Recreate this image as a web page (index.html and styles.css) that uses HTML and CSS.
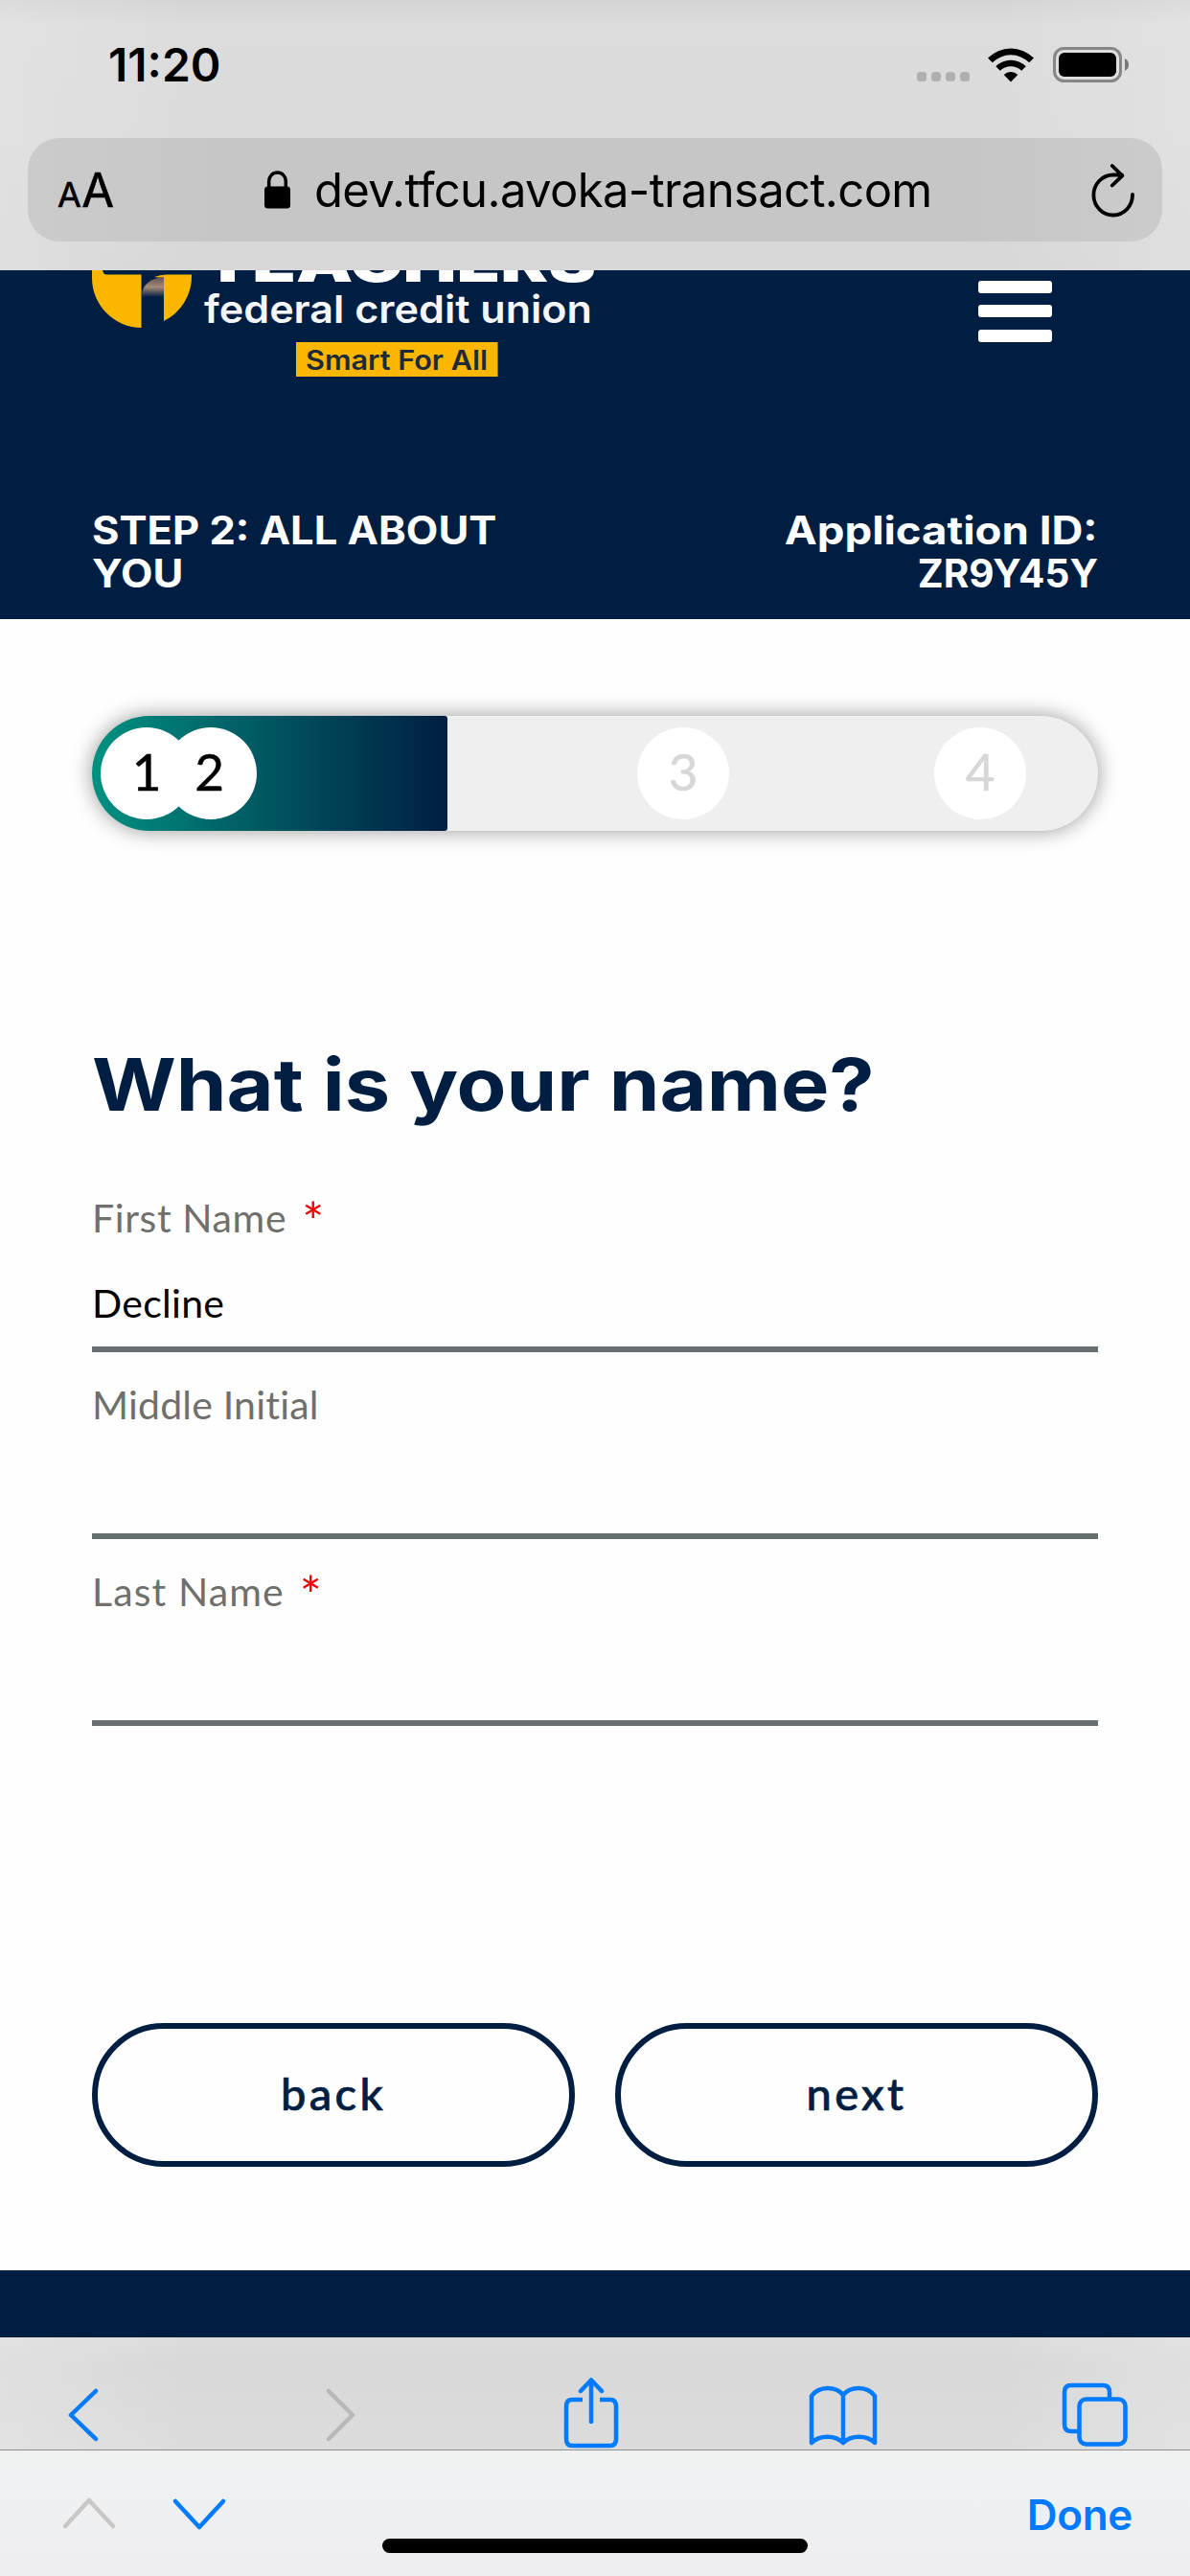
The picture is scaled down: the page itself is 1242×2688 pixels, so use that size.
FILE: index.html
```html
<!DOCTYPE html>
<html lang="en">
<head>
<meta charset="utf-8">
<title>Teachers Federal Credit Union</title>
<link rel="stylesheet" href="styles.css">
</head>
<body>
<div class="screen">
  <div class="browser-top">
    <div class="status-bar">
      <span class="time">11:20</span>
      <div class="status-icons">
        <span class="dots"><i></i><i></i><i></i><i></i></span>
        <svg class="wifi" width="48" height="37" viewBox="0 0 48 37">
          <path d="M0 11.5A34 34 0 0 1 48 11.5L43.2 16.3A27.2 27.2 0 0 0 4.8 16.3Z"/>
          <path d="M8.3 20.2A22.2 22.2 0 0 1 39.7 20.2L35.2 24.8A15.8 15.8 0 0 0 12.8 24.8Z"/>
          <path d="M16.7 28.9A10.5 10.5 0 0 1 31.3 28.9L24 36.6Z"/>
        </svg>
        <svg class="battery" width="80" height="37" viewBox="0 0 80 37">
          <rect x="1.5" y="1.5" width="69" height="34" rx="10" fill="none" stroke="#868686" stroke-width="3"/>
          <rect x="6" y="6" width="60" height="25" rx="6"/>
          <path d="M75 12Q79 14 79 18.500T75 25Z" fill="#777"/>
        </svg>
      </div>
    </div>
    <div class="address-bar">
      <span class="text-size"><span class="small-a">A</span><span class="large-a">A</span></span>
      <svg class="lock" width="27" height="40" viewBox="0 0 27 40">
        <rect x="0" y="16.500" width="27" height="23" rx="3.500"/>
        <path d="M4.700 19V11a8.800 9 0 0 1 17.600 0V19" fill="none" stroke="#000" stroke-width="3.500"/>
      </svg>
      <span class="domain">dev.tfcu.avoka-transact.com</span>
      <svg class="reload" width="46" height="56" viewBox="0 0 46 56">
        <path d="M43 31.800A20.300 21 0 1 1 22.700 11.500H32M21.800 2L32.300 12.300L21.800 22.500" fill="none" stroke="#000" stroke-width="3.800" stroke-linecap="round" stroke-linejoin="round"/>
      </svg>
    </div>
  </div>

  <header class="site-header">
    <div class="brand-row">
      <svg class="logo" width="530" height="112" viewBox="0 0 530 112">
        <defs>
          <linearGradient id="stem" x1="0" y1="0" x2="0" y2="1">
            <stop offset="0" stop-color="#5f5152"/>
            <stop offset=".5" stop-color="#a58a78"/>
            <stop offset="1" stop-color="#001e41"/>
          </linearGradient>
        </defs>
        <path d="M0 0H11Q12 5 16 4.500H51.500V60A52 52 0 0 1 0 8Z" fill="#fbb600"/>
        <path d="M65 7Q71 4.500 78 4.500H104A52 52 0 0 1 75 53V8Z" fill="#fbb600"/>
        <path d="M52 28V24Q55 9 75 7V28Z" fill="url(#stem)"/>
        <text class="logo-name" x="116" y="12" textLength="410" lengthAdjust="spacingAndGlyphs">TEACHERS</text>
        <text class="logo-sub" x="117" y="54.500" textLength="405" lengthAdjust="spacingAndGlyphs">federal credit union</text>
        <rect x="213" y="75" width="210.500" height="36" fill="#fbb600"/>
        <text class="logo-tag" x="223" y="103.500" textLength="190" lengthAdjust="spacingAndGlyphs">Smart For All</text>
      </svg>
      <div class="menu"><i></i><i></i><i></i></div>
    </div>
    <div class="step-row">
      <div class="step-title">STEP 2: ALL ABOUT<br>YOU</div>
      <div class="application"><span class="app-label">Application ID:</span><br><span class="app-id">ZR9Y45Y</span></div>
    </div>
  </header>

  <main class="content">
    <div class="progress">
      <div class="progress-fill"></div>
      <span class="step step-1">1</span>
      <span class="step step-2">2</span>
      <span class="step step-3">3</span>
      <span class="step step-4">4</span>
    </div>
    <h1 class="question">What is your name?</h1>
    <div class="field">
      <div class="label"><span class="first">First Name</span><span class="required">*</span></div>
      <div class="value">Decline</div>
    </div>
    <div class="field">
      <div class="label"><span class="middle">Middle Initial</span></div>
      <div class="value"></div>
    </div>
    <div class="field">
      <div class="label"><span class="last">Last Name</span><span class="required">*</span></div>
      <div class="value"></div>
    </div>
    <div class="actions">
      <button class="button">back</button>
      <button class="button">next</button>
    </div>
  </main>

  <div class="site-footer"></div>

  <div class="toolbar">
    <svg class="tool-back" width="35" height="58" viewBox="0 0 35 58"><path d="M31 4L5 29L31 54"/></svg>
    <svg class="tool-forward" width="35" height="58" viewBox="0 0 35 58"><path d="M4 4L29 29L4 54"/></svg>
    <svg class="tool-share" width="58" height="74" viewBox="0 0 58 74"><path class="square" d="M20 23H9Q3 23 3 30V64Q3 71 9 71H49Q55 71 55 64V30Q55 23 49 23H38"/><path d="M29 46V3M18 14L29 2.500L40 14"/></svg>
    <svg class="tool-book" width="72" height="63" viewBox="0 0 72 63"><path d="M3 60V11C11 .5 28 .5 36 10C44 .5 61 .5 69 11V60C61 51.500 44 51.500 36 60C28 51.500 11 51.500 3 60ZM36 10V60"/></svg>
    <svg class="tool-tabs" width="69" height="68" viewBox="0 0 69 68"><path d="M17 51H10Q3 51 3 44V10Q3 3 10 3H43Q50 3 50 10V17"/><rect x="18.500" y="17.500" width="48" height="47" rx="7"/></svg>
  </div>
  <div class="accessory">
    <svg class="prev" width="58" height="36" viewBox="0 0 58 36"><path d="M4 32L29 5L54 32"/></svg>
    <svg class="following" width="58" height="36" viewBox="0 0 58 36"><path d="M4 4L29 31L54 4"/></svg>
    <span class="done">Done</span>
    <span class="home-indicator"></span>
  </div>
</div>
</body>
</html>
```
FILE: styles.css
```css
* { box-sizing: border-box; }

body { margin: 0; background: #fff; }

.screen {
  width: 1242px;
  height: 2688px;
  display: flex;
  flex-direction: column;
  overflow: hidden;
  font-family: "Inter", "Liberation Sans", sans-serif;
  color: #000;
}

svg { display: block; flex: none; }

/* Browser chrome, top */
.browser-top {
  height: 282px;
  flex: none;
  padding: 0 29px;
  background:
    linear-gradient(90deg, rgba(255,255,255,.18), transparent 16%, transparent 84%, rgba(255,255,255,.18)),
    linear-gradient(#d4d4d4, #dcdcdc 9%, #dbdbdb 50%, #d7d7d7);
}

.status-bar {
  height: 144px;
  display: flex;
  justify-content: space-between;
  align-items: flex-start;
  padding: 49px 34px 0 84px;
}

.time { font-size: 48px; font-weight: 600; line-height: 37px; }

.status-icons { display: flex; align-items: flex-start; }

.dots { display: flex; gap: 5px; margin: 26px 19px 0 0; }
.dots i { width: 10px; height: 10px; border-radius: 3.5px; background: #afafaf; }

.battery { margin-left: 20px; }

.address-bar {
  height: 108px;
  display: flex;
  align-items: flex-start;
  padding: 0 28px 0 31px;
  border-radius: 33px;
  background: linear-gradient(90deg, #cbcbcb, #c6c6c6 18%, #c6c6c6 82%, #cbcbcb);
}

.text-size { width: 59px; display: flex; align-items: baseline; justify-content: space-between; margin: 27px 157px 0 0; line-height: 56px; -webkit-text-stroke: .6px #000; }
.small-a { font-size: 36px; }
.large-a { font-size: 49px; }

.lock { margin: 34px 25px 0 0; }
.domain { font-size: 49px; line-height: 60px; margin-top: 25px; letter-spacing: -.65px; white-space: nowrap; }
.reload { margin: 27px 0 0 auto; }

/* Site header */
.site-header {
  height: 364px;
  flex: none;
  display: flex;
  flex-direction: column;
  justify-content: space-between;
  padding: 0 96px 25px;
  background: #001e41;
  color: #fff;
}

.brand-row { display: flex; justify-content: space-between; align-items: flex-start; }

.logo-name { font-size: 58px; font-weight: 900; fill: #fff; }
.logo-sub { font-size: 40px; font-weight: 600; fill: #f4f6fa; }
.logo-tag { font-size: 28px; font-weight: 600; fill: #1c2a3a; }

.menu { width: 77px; display: grid; gap: 12.5px; margin: 10.500px 48px 0 0; }
.menu i { height: 13.2px; border-radius: 3px; background: #fff; }

.step-row {
  display: flex;
  justify-content: space-between;
  font-size: 40.5px;
  font-weight: 700;
  line-height: 45px;
}
.step-title { transform: scaleX(1.074); transform-origin: left; }
.application { text-align: right; }
.app-label { display: inline-block; transform: scaleX(1.125); transform-origin: right; }

/* Form */
.content {
  height: 1723px;
  flex: none;
  padding: 101px 96px 0;
  background: #fefefe;
  font-family: "Lato", "Open Sans", sans-serif;
}

.progress {
  position: relative;
  height: 120px;
  border-radius: 60px;
  background: #efefef;
  box-shadow: 0 0 22px rgba(0,0,0,.4);
}
.progress-fill {
  width: 371px;
  height: 120px;
  border-radius: 60px 3px 3px 60px;
  background: linear-gradient(90deg, #009181, #005b63 45%, #001e41);
}
.step {
  position: absolute;
  top: 12px;
  width: 96px;
  height: 96px;
  border-radius: 50%;
  background: #fff;
  font-size: 53px;
  line-height: 92px;
  text-align: center;
  -webkit-text-stroke: .5px;
}
.step-1 { left: 9px; }
.step-2 { left: 76px; padding-right: 3px; }
.step-3 { left: 569px; color: #d7d7d7; }
.step-4 { left: 879px; color: #d7d7d7; }

.question {
  margin: 209px 0 0;
  font-family: "Inter", sans-serif;
  font-size: 76px;
  font-weight: 700;
  line-height: 110px;
  color: #001e41;
  transform: scaleX(1.114);
  transform-origin: left;
}

.field { height: 195px; border-bottom: 6px solid #656f70; }
.question + .field { height: 225px; padding-top: 30px; }
.label { display: flex; gap: 16px; height: 94px; padding-top: 25px; font-size: 41px; line-height: 60px; color: #6f6f6c; }
.first { letter-spacing: .6px; }
.middle { letter-spacing: .2px; }
.last { letter-spacing: 1.1px; }
.required { font-size: 54px; line-height: 66px; color: #f00000; }
.value { font-size: 41px; line-height: 60px; padding-top: 20px; letter-spacing: .3px; }

.actions { display: flex; gap: 42px; margin-top: 310px; }
.button {
  flex: 1;
  height: 150px;
  padding: 0 0 5px;
  border: 6px solid #001e41;
  border-radius: 75px;
  background: transparent;
  font: 500 47px "Lato", sans-serif;
  letter-spacing: 3.3px;
  color: #001e41;
  -webkit-text-stroke: .7px #001e41;
}

.site-footer { height: 70px; flex: none; background: #001e41; }

/* Browser chrome, bottom */
.toolbar {
  height: 118px;
  flex: none;
  display: flex;
  align-items: flex-start;
  border-bottom: 1px solid #8e9292;
  background:
    linear-gradient(90deg, rgba(255,255,255,.18), transparent 16%, transparent 84%, rgba(255,255,255,.18)),
    linear-gradient(#dcdcdc, #d8d8d8 25%, #dcdcdc);
}
.toolbar path, .toolbar rect, .accessory path {
  fill: none;
  stroke: #007aff;
  stroke-width: 4.5px;
  stroke-linecap: round;
  stroke-linejoin: round;
}
.toolbar .tool-forward path { stroke: #b9b9b9; }
.toolbar .square { stroke-linecap: butt; }
.tool-back { margin: 52px 0 0 69px; }
.tool-forward { margin: 52px 0 0 235px; }
.tool-share { margin: 42px 0 0 214px; }
.tool-book { margin: 50px 0 0 198px; }
.tool-tabs { margin: 47px 0 0 192px; }

.accessory {
  position: relative;
  flex: 1;
  display: flex;
  align-items: flex-start;
  padding-right: 60px;
  background: linear-gradient(#eff1f1, #eeeef2);
}
.prev { margin: 47px 0 0 64px; }
.accessory .prev path { stroke: #c7c7c7; }
.following { margin: 49px 0 0 57px; }
.done { margin: 37px 0 0 auto; font-size: 44px; font-weight: 600; line-height: 60px; letter-spacing: -.3px; color: #007aff; }
.home-indicator {
  position: absolute;
  left: 399px;
  top: 92px;
  width: 444px;
  height: 15px;
  border-radius: 8px;
  background: #000;
}
```
